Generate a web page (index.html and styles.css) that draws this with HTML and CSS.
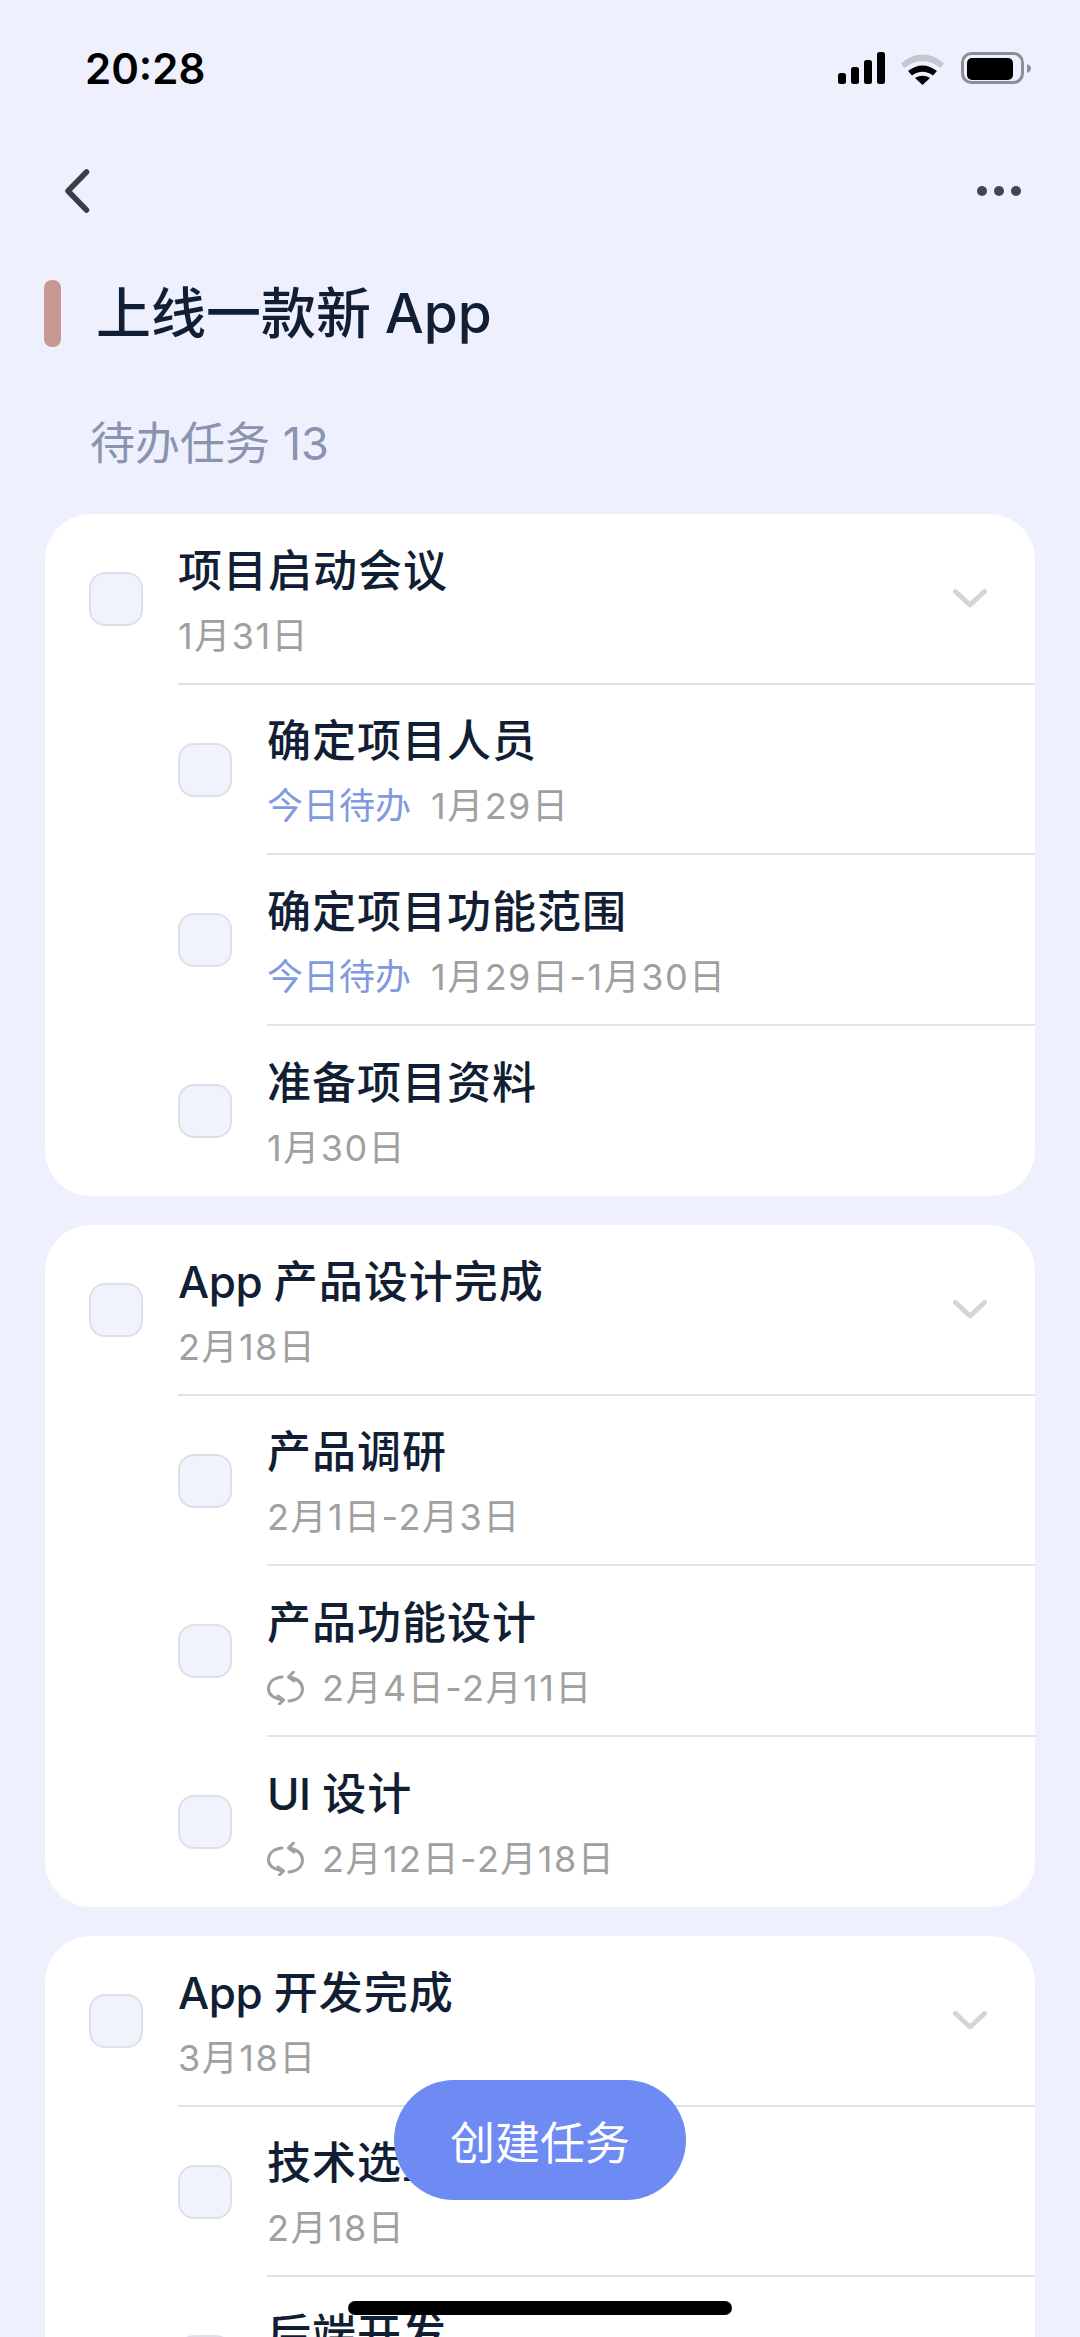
FILE: index.html
```html
<!DOCTYPE html>
<html lang="zh-CN">
  <head>
    <meta charset="UTF-8" />
    <meta name="viewport" content="width=device-width, initial-scale=1.0" />
    <title>上线一款新 App</title>
    <link rel="stylesheet" href="styles.css">
  </head>
  <body>
    <svg width="0" height="0" class="defs">
      <symbol id="repeat" viewBox="0 0 37 34">
        <path d="M15 6C6 7 1.500 12 1.500 18c0 5 4 9 14 11" />
        <path d="M11 25l5.500 4-4 4" />
        <path d="M22 30c9-1 13.500-6 13.500-12 0-6-4-10-13-12" />
        <path d="M26.500 1l-5 5 5.500 4" />
      </symbol>
      <symbol id="chevron" viewBox="0 0 34 19">
        <path d="M2.500 2.500L17 16 31.500 2.500" />
      </symbol>
    </svg>

    <div class="phone">
      <div class="status-bar">
        <span class="time">20:28</span>
        <svg class="status-icons" width="193" height="34" viewBox="0 0 193 34">
          <rect x="0" y="21" width="8" height="11" rx="2.500" />
          <rect x="13" y="15" width="8" height="17" rx="2.500" />
          <rect x="26" y="8" width="8" height="24" rx="2.500" />
          <rect x="39" y="0" width="8" height="32" rx="2.500" />
          <path class="wifi-off" d="M63 11.500C76 -0.500 93 -0.500 106 11.500L102.500 16C91 6.500 78 6.500 66.500 16Z" />
          <path d="M70 19C79 11.500 90 11.500 99 19L95 23.500C88 18.500 81 18.500 74 23.500Z" />
          <path d="M77 26C82 23 87 23 92 26L84.500 33Z" />
          <rect class="battery-line" x="124.500" y="1.500" width="60" height="29" rx="9" />
          <rect x="129" y="6" width="46" height="22" rx="5" />
          <path class="battery-nub" d="M189 12c3 1 4 3 4 4.500s-1 3.500-4 4.500Z" />
        </svg>
      </div>

      <div class="nav-bar">
        <svg class="back" width="26" height="44" viewBox="0 0 26 44"><path d="M22.500 3L4 22l18.500 19" /></svg>
        <div class="more"><i></i><i></i><i></i></div>
      </div>

      <div class="project">
        <span class="project-mark"></span>
        <h1>上线一款新 App</h1>
      </div>
      <h2 class="section-title">待办任务 13</h2>

      <section class="card">
        <div class="task">
          <span class="check"></span>
          <div class="task-body">
            <div class="task-text">
              <div class="task-name">项目启动会议</div>
              <div class="task-meta">1月31日</div>
            </div>
            <svg class="chevron"><use href="#chevron" /></svg>
          </div>
        </div>
        <div class="task sub">
          <span class="check"></span>
          <div class="task-body">
            <div class="task-text">
              <div class="task-name">确定项目人员</div>
              <div class="task-meta"><span class="today">今日待办</span>1月29日</div>
            </div>
          </div>
        </div>
        <div class="task sub">
          <span class="check"></span>
          <div class="task-body">
            <div class="task-text">
              <div class="task-name">确定项目功能范围</div>
              <div class="task-meta"><span class="today">今日待办</span>1月29日-1月30日</div>
            </div>
          </div>
        </div>
        <div class="task sub">
          <span class="check"></span>
          <div class="task-body">
            <div class="task-text">
              <div class="task-name">准备项目资料</div>
              <div class="task-meta">1月30日</div>
            </div>
          </div>
        </div>
      </section>

      <section class="card">
        <div class="task">
          <span class="check"></span>
          <div class="task-body">
            <div class="task-text">
              <div class="task-name"><span class="latin">App</span> 产品设计完成</div>
              <div class="task-meta">2月18日</div>
            </div>
            <svg class="chevron"><use href="#chevron" /></svg>
          </div>
        </div>
        <div class="task sub">
          <span class="check"></span>
          <div class="task-body">
            <div class="task-text">
              <div class="task-name">产品调研</div>
              <div class="task-meta">2月1日-2月3日</div>
            </div>
          </div>
        </div>
        <div class="task sub">
          <span class="check"></span>
          <div class="task-body">
            <div class="task-text">
              <div class="task-name">产品功能设计</div>
              <div class="task-meta"><svg class="repeat"><use href="#repeat" /></svg>2月4日-2月11日</div>
            </div>
          </div>
        </div>
        <div class="task sub">
          <span class="check"></span>
          <div class="task-body">
            <div class="task-text">
              <div class="task-name"><span class="latin">UI</span> 设计</div>
              <div class="task-meta"><svg class="repeat"><use href="#repeat" /></svg>2月12日-2月18日</div>
            </div>
          </div>
        </div>
      </section>

      <section class="card">
        <div class="task">
          <span class="check"></span>
          <div class="task-body">
            <div class="task-text">
              <div class="task-name"><span class="latin">App</span> 开发完成</div>
              <div class="task-meta">3月18日</div>
            </div>
            <svg class="chevron"><use href="#chevron" /></svg>
          </div>
        </div>
        <div class="task sub">
          <span class="check"></span>
          <div class="task-body">
            <div class="task-text">
              <div class="task-name">技术选型</div>
              <div class="task-meta">2月18日</div>
            </div>
          </div>
        </div>
        <div class="task sub">
          <span class="check"></span>
          <div class="task-body">
            <div class="task-text">
              <div class="task-name">后端开发</div>
              <div class="task-meta"></div>
            </div>
          </div>
        </div>
      </section>

      <button class="create-btn">创建任务</button>
      <div class="home-bar"></div>
    </div>
  </body>
</html>
```

FILE: styles.css
```css
html,
body {
  margin: 0;
  padding: 0;
}
body {
  font-family: Inter, "Noto Sans CJK SC", sans-serif;
  color: #111e33;
}
.defs {
  position: absolute;
}
.phone {
  position: relative;
  width: 1080px;
  height: 2337px;
  overflow: hidden;
  background-color: #eef1fd;
}

/* status bar */
.status-bar {
  display: flex;
  justify-content: space-between;
  align-items: center;
  height: 68px;
  padding: 35px 49px 0 85px;
}
.time {
  margin-bottom: 2px;
  font-size: 42px;
  font-weight: 600;
  color: #000;
}
.status-icons {
  fill: #000;
}
.wifi-off {
  fill: #c5c7d0;
}
.battery-line {
  fill: none;
  stroke: #8d8f97;
  stroke-width: 3;
}
.battery-nub {
  fill: #8d8f97;
}

/* nav */
.nav-bar {
  display: flex;
  justify-content: space-between;
  align-items: center;
  height: 44px;
  margin-top: 65.500px;
  padding: 0 59px 0 64px;
}
.back path {
  fill: none;
  stroke: #3a3d45;
  stroke-width: 5.500;
  stroke-linecap: round;
  stroke-linejoin: round;
}
.more {
  display: flex;
  gap: 7px;
}
.more i {
  width: 10px;
  height: 10px;
  border-radius: 50%;
  background-color: #43464f;
}

/* heading */
.project {
  display: flex;
  align-items: center;
  gap: 35px;
  margin-top: 67px;
  padding-left: 44px;
}
.project-mark {
  width: 17px;
  height: 67px;
  border-radius: 8px;
  background-color: #c69793;
}
.project h1 {
  margin: 0;
  font-size: 55px;
  font-weight: 500;
  line-height: 67px;
  word-spacing: -1px;
}
.section-title {
  margin: 67px 0 40.500px 90px;
  font-size: 45px;
  font-weight: 400;
  line-height: 60px;
  color: #8a93b0;
}

/* task cards */
.card {
  margin: 0 45px 29px;
  border-radius: 46px;
  background-color: #fff;
  overflow: hidden;
}
.task {
  display: flex;
  align-items: center;
  height: 170.500px;
  padding-left: 44px;
}
.task.sub {
  padding-left: 133px;
}
.check {
  flex: none;
  box-sizing: border-box;
  width: 54px;
  height: 54px;
  margin-right: 35px;
  border: 2.500px solid #dde0e9;
  border-radius: 16px;
  background-color: #f0f3fc;
}
.task-body {
  flex: 1;
  display: flex;
  align-items: center;
  justify-content: space-between;
  box-sizing: border-box;
  height: 100%;
  padding-right: 48px;
  border-bottom: 2px solid #dfe2e6;
}
.task:last-child .task-body {
  border-bottom: none;
}
.task-text {
  padding-top: 7px;
}
.task-name {
  font-size: 44px;
  font-weight: 500;
  line-height: 56px;
  letter-spacing: 1px;
  word-spacing: -1px;
}
.latin {
  letter-spacing: -0.500px;
}
.task-meta {
  display: flex;
  align-items: center;
  min-height: 50px;
  margin-top: 12px;
  font-size: 36px;
  line-height: 50px;
  letter-spacing: 1.500px;
  color: #a0a0a0;
}
.today {
  margin-right: 20px;
  letter-spacing: 0;
  color: #7f9ade;
}
.chevron {
  width: 34px;
  height: 19px;
  fill: none;
  stroke: #d5d5d8;
  stroke-width: 5;
  stroke-linecap: round;
  stroke-linejoin: round;
}
.repeat {
  width: 37px;
  height: 34px;
  margin-right: 18px;
  fill: none;
  stroke: #a0a0a0;
  stroke-width: 3;
  stroke-linecap: round;
  stroke-linejoin: round;
}

/* floating */
.create-btn {
  position: absolute;
  left: 394px;
  top: 2080px;
  width: 292px;
  height: 120px;
  padding: 0;
  border: none;
  border-radius: 60px;
  background-color: #6d8bf2;
  color: #fff;
  font-family: inherit;
  font-size: 45px;
  font-weight: 400;
}
.home-bar {
  position: absolute;
  left: 348px;
  top: 2301px;
  width: 384px;
  height: 14px;
  border-radius: 7px;
  background-color: #000;
}
```
